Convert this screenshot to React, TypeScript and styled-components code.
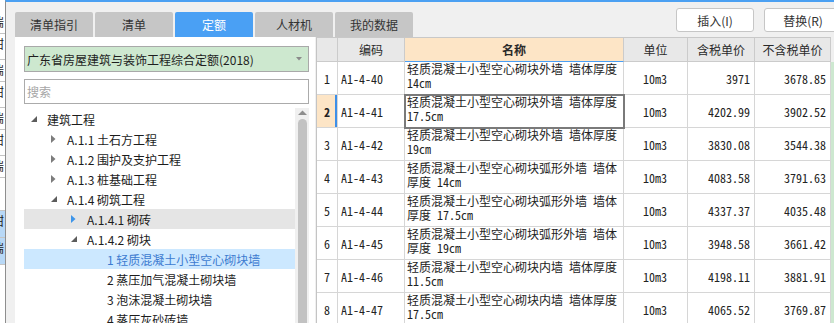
import styled, { createGlobalStyle } from "styled-components";

const GlobalStyle = createGlobalStyle`
	html, body {
		margin: 0;
		padding: 0;
		background: #f0f0f0;
	}
	body {
		font-family: "Noto Sans CJK SC", "Microsoft YaHei", sans-serif;
		font-size: 12px;
		color: #222;
		overflow: hidden;
	}
`

const UI_FONT = `"Noto Sans CJK SC", sans-serif`;
const GRID_FONT = `"Noto Sans Mono CJK SC", "Noto Sans CJK SC", monospace`;

const Screen = styled.div`
	width: 834px;
	height: 323px;
	display: flex;
	overflow: hidden;
`

/* the window behind the dialog, only a sliver is visible */
const Behind = styled.div`
	width: 5px;
	flex: none;
	background: #fff;
	overflow: hidden;
	display: flex;
	flex-direction: column;
	padding-top: 12px;
`

const BehindCell = styled.div<{ $blue?: boolean; $h: number }>`
	height: ${p => p.$h}px;
	flex: none;
	box-sizing: border-box;
	overflow: hidden;
	border-bottom: 1px solid #c4c4c4;
	background: ${p => (p.$blue ? "#b8d8f6" : "transparent")};
	font: 12px/12px ${UI_FONT};
	color: #222;
	white-space: nowrap;
	padding-top: 4px;
	margin-left: -8px;
	padding-left: 8px;
	text-indent: -8px;
`

const Dialog = styled.div`
	flex: 1;
	min-width: 0;
	display: flex;
	flex-direction: column;
	border-left: 1px solid #8e8e8e;
	border-top: 2px solid #4ba0f2;
	padding-left: 9px;
	background: #f0f0f0;
`

const TopBar = styled.div`
	height: 35px;
	flex: none;
	display: flex;
`

const Tabs = styled.div`
	display: flex;
	gap: 2px;
	align-self: flex-end;
`

const Tab = styled.div<{ $active?: boolean }>`
	width: 78px;
	height: 25px;
	border-radius: 2px 2px 0 0;
	background: ${p => (p.$active ? "#4aa0f4" : "#c6c6c6")};
	color: ${p => (p.$active ? "#fff" : "#333")};
	font: 12px ${UI_FONT};
	display: flex;
	align-items: center;
	justify-content: center;
`

const Buttons = styled.div`
	margin-left: auto;
	margin-right: -8px;
	padding-top: 6px;
	display: flex;
	gap: 10px;
	align-self: flex-start;
`

const Button = styled.button`
	width: 78px;
	height: 24px;
	box-sizing: border-box;
	border: 1px solid #c6c6c6;
	border-radius: 3px;
	background: #fff;
	color: #333;
	font: 12px ${UI_FONT};
	padding: 0;
`

const Body = styled.div`
	flex: 1;
	min-height: 0;
	display: flex;
`

const LeftPanel = styled.div`
	width: 300px;
	flex: none;
	box-sizing: border-box;
	background: #fff;
	padding: 9px 6px 0 9px;
	display: flex;
	flex-direction: column;
	overflow: hidden;
`

const Select = styled.div`
	height: 26px;
	flex: none;
	box-sizing: border-box;
	border: 1px solid #a9a9a9;
	background: #cde8cf;
	display: flex;
	align-items: center;
	padding: 0 6px 0 2px;
	font: 12px ${UI_FONT};
	color: #1e1e1e;
	span {
		flex: 1;
	}
`

const SearchInput = styled.input`
	height: 25px;
	flex: none;
	margin-top: 7px;
	box-sizing: border-box;
	width: 100%;
	border: 1px solid #ababab;
	padding: 0 2px;
	font: 12px ${UI_FONT};
	outline: none;
	&::placeholder {
		color: #a6a6a6;
	}
`

const TreeArea = styled.div`
	margin-top: 4px;
	flex: 1;
	min-height: 0;
	display: flex;
`

const TreeList = styled.div`
	flex: 1;
	padding-top: 1px;
`

const TreeRow = styled.div<{ $level: number; $state?: "hover" | "selected" }>`
	height: 20px;
	display: flex;
	align-items: center;
	padding-left: ${p => 7 + p.$level * 20}px;
	background: ${p => (p.$state === "hover" ? "#e5e5e5" : p.$state === "selected" ? "#cce8ff" : "transparent")};
	color: ${p => (p.$state === "selected" ? "#3d7bd0" : "#1c1c1c")};
	font: 12px ${UI_FONT};
	white-space: nowrap;
`

const Toggle = styled.span`
	width: 16px;
	flex: none;
	display: flex;
	align-items: center;
`

const ScrollBar = styled.div`
	width: 14px;
	flex: none;
	background: #f0f0f0;
	display: flex;
	flex-direction: column;
	align-items: center;
	padding-top: 2px;
`

const Thumb = styled.div`
	margin-top: 3px;
	width: 9px;
	flex: 1;
	border-radius: 5px 5px 0 0;
	background: #c2c2c2;
`

const Grid = styled.div`
	margin-left: 1px;
	width: 515px;
	flex: none;
	box-sizing: border-box;
	border-left: 1px solid #c4c4c4;
	border-top: 1px solid #c8c8c8;
	background: #fff;
	display: grid;
	grid-template-columns: 21px 67px 219px 64px 67px 76px;
	grid-template-rows: 24px;
	grid-auto-rows: 33px;
	align-content: start;
	overflow: hidden;
`

const HeadCell = styled.div<{ $accent?: boolean }>`
	box-sizing: border-box;
	background: ${p => (p.$accent ? "#fde5c6" : "#e8e8e8")};
	border-right: 1px solid #cbcbcb;
	border-bottom: 1px solid ${p => (p.$accent ? "#4a9ff5" : "#cbcbcb")};
	font: ${p => (p.$accent ? "bold" : "normal")} 12px ${UI_FONT};
	color: #2a2a2a;
	display: flex;
	align-items: center;
	justify-content: center;
`

const Cell = styled.div<{ $align?: "left" | "center" | "right" }>`
	box-sizing: border-box;
	border-right: 1px solid #d6d6d6;
	border-bottom: 1px solid #d6d6d6;
	font: 12px ${GRID_FONT};
	color: #222;
	display: flex;
	align-items: center;
	justify-content: ${p => (p.$align === "right" ? "flex-end" : p.$align === "center" ? "center" : "flex-start")};
	padding: 0 4px 0 3px;
	white-space: nowrap;
`

const RowNo = styled(Cell)<{ $current?: boolean }>`
	padding: 0;
	justify-content: center;
	background: ${p => (p.$current ? "#fde5c6" : "#fff")};
	font-weight: ${p => (p.$current ? "bold" : "normal")};
	box-shadow: ${p => (p.$current ? "inset -2px 0 0 #3d8fe8" : "none")};
`

const NameCell = styled(Cell)<{ $focused?: boolean }>`
	display: block;
	padding: 0 0 0 2px;
	line-height: 14px;
	position: relative;
	outline: ${p => (p.$focused ? "2px solid #7a7a7a" : "none")};
	outline-offset: -1px;
	z-index: ${p => (p.$focused ? 1 : 0)};
`

const GreenStrip = styled.div`
	width: 3px;
	flex: none;
	margin-top: 25px;
	background: #cde8d0;
`

const OpenArrow = () => (
	<svg width="6" height="6" viewBox="0 0 6 6">
		<polygon points="6,0 6,6 0,6" fill="#5c5c5c" />
	</svg>
);

const ClosedArrow = ({ color }: { color: string }) => (
	<svg width="5" height="8" viewBox="0 0 5 8">
		<polygon points="0,0 4.5,4 0,8" fill={color} />
	</svg>
);

type TreeItem = {
	level: number;
	label: string;
	toggle?: "open" | "closed";
	state?: "hover" | "selected";
};

const tree: TreeItem[] = [
	{ level: 0, label: "建筑工程", toggle: "open" },
	{ level: 1, label: "A.1.1 土石方工程", toggle: "closed" },
	{ level: 1, label: "A.1.2 围护及支护工程", toggle: "closed" },
	{ level: 1, label: "A.1.3 桩基础工程", toggle: "closed" },
	{ level: 1, label: "A.1.4 砌筑工程", toggle: "open" },
	{ level: 2, label: "A.1.4.1 砌砖", toggle: "closed", state: "hover" },
	{ level: 2, label: "A.1.4.2 砌块", toggle: "open" },
	{ level: 3, label: "1 轻质混凝土小型空心砌块墙", state: "selected" },
	{ level: 3, label: "2 蒸压加气混凝土砌块墙" },
	{ level: 3, label: "3 泡沫混凝土砌块墙" },
	{ level: 3, label: "4 蒸压灰砂砖墙" },
];

const rows = [
	{ code: "A1-4-40", l1: "轻质混凝土小型空心砌块外墙 墙体厚度", l2: "14cm", tax: "3971", net: "3678.85" },
	{ code: "A1-4-41", l1: "轻质混凝土小型空心砌块外墙 墙体厚度", l2: "17.5cm", tax: "4202.99", net: "3902.52" },
	{ code: "A1-4-42", l1: "轻质混凝土小型空心砌块外墙 墙体厚度", l2: "19cm", tax: "3830.08", net: "3544.38" },
	{ code: "A1-4-43", l1: "轻质混凝土小型空心砌块弧形外墙 墙体", l2: "厚度 14cm", tax: "4083.58", net: "3791.63" },
	{ code: "A1-4-44", l1: "轻质混凝土小型空心砌块弧形外墙 墙体", l2: "厚度 17.5cm", tax: "4337.37", net: "4035.48" },
	{ code: "A1-4-45", l1: "轻质混凝土小型空心砌块弧形外墙 墙体", l2: "厚度 19cm", tax: "3948.58", net: "3661.42" },
	{ code: "A1-4-46", l1: "轻质混凝土小型空心砌块内墙 墙体厚度", l2: "11.5cm", tax: "4198.11", net: "3881.91" },
	{ code: "A1-4-47", l1: "轻质混凝土小型空心砌块内墙 墙体厚度", l2: "17.5cm", tax: "4065.52", net: "3769.87" },
];

// slivers of the window behind: one glyph per cell
const behind = [
	{ h: 22, t: "湍" },
	{ h: 26, t: "钳" },
	{ h: 22, t: "湍" },
	{ h: 26, t: "钳" },
	{ h: 22, t: "湍" },
	{ h: 26, t: "钳" },
	{ h: 22, t: "湍" },
	{ h: 33, t: "" },
	{ h: 27, t: "钳", blue: true },
	{ h: 27, t: "湍", blue: true },
];

const tabs = ["清单指引", "清单", "定额", "人材机", "我的数据"];

const App = () => {
	return (
		<>
			<GlobalStyle />
			<Screen>
				<Behind>
					{behind.map((b, i) => (
						<BehindCell key={i} $h={b.h} $blue={b.blue}>
							{b.t}
						</BehindCell>
					))}
				</Behind>
				<Dialog>
					<TopBar>
						<Tabs>
							{tabs.map(t => (
								<Tab key={t} $active={t === "定额"}>{t}</Tab>
							))}
						</Tabs>
						<Buttons>
							<Button>插入(I)</Button>
							<Button>替换(R)</Button>
						</Buttons>
					</TopBar>
					<Body>
						<LeftPanel>
							<Select>
								<span>广东省房屋建筑与装饰工程综合定额(2018)</span>
								<svg width="6" height="4" viewBox="0 0 6 4">
									<polygon points="0,0 6,0 3,3.5" fill="#8a8a8a" />
								</svg>
							</Select>
							<SearchInput placeholder="搜索" readOnly />
							<TreeArea>
								<TreeList>
									{tree.map(item => (
										<TreeRow key={item.label} $level={item.level} $state={item.state}>
											<Toggle>
												{item.toggle === "open" ? <OpenArrow /> : null}
												{item.toggle === "closed" ? (
													<ClosedArrow color={item.state === "hover" ? "#3d95ea" : "#7c7c7c"} />
												) : null}
											</Toggle>
											{item.label}
										</TreeRow>
									))}
								</TreeList>
								<ScrollBar>
									<svg width="9" height="6" viewBox="0 0 9 6">
										<polygon points="4.5,0.5 9,5 0,5" fill="#8e8e8e" />
									</svg>
									<Thumb />
								</ScrollBar>
							</TreeArea>
						</LeftPanel>
						<Grid>
							<HeadCell />
							<HeadCell>编码</HeadCell>
							<HeadCell $accent>名称</HeadCell>
							<HeadCell>单位</HeadCell>
							<HeadCell>含税单价</HeadCell>
							<HeadCell>不含税单价</HeadCell>
							{rows.map((r, i) => [
								<RowNo key={r.code + "n"} $current={i === 1}>{i + 1}</RowNo>,
								<Cell key={r.code + "c"}>{r.code}</Cell>,
								<NameCell key={r.code + "m"} $focused={i === 1}>
									{r.l1}
									<br />
									{r.l2}
								</NameCell>,
								<Cell key={r.code + "u"} $align="center">10m3</Cell>,
								<Cell key={r.code + "t"} $align="right">{r.tax}</Cell>,
								<Cell key={r.code + "p"} $align="right">{r.net}</Cell>,
							])}
						</Grid>
						<GreenStrip />
					</Body>
				</Dialog>
			</Screen>
		</>
	);
}

export default App;
